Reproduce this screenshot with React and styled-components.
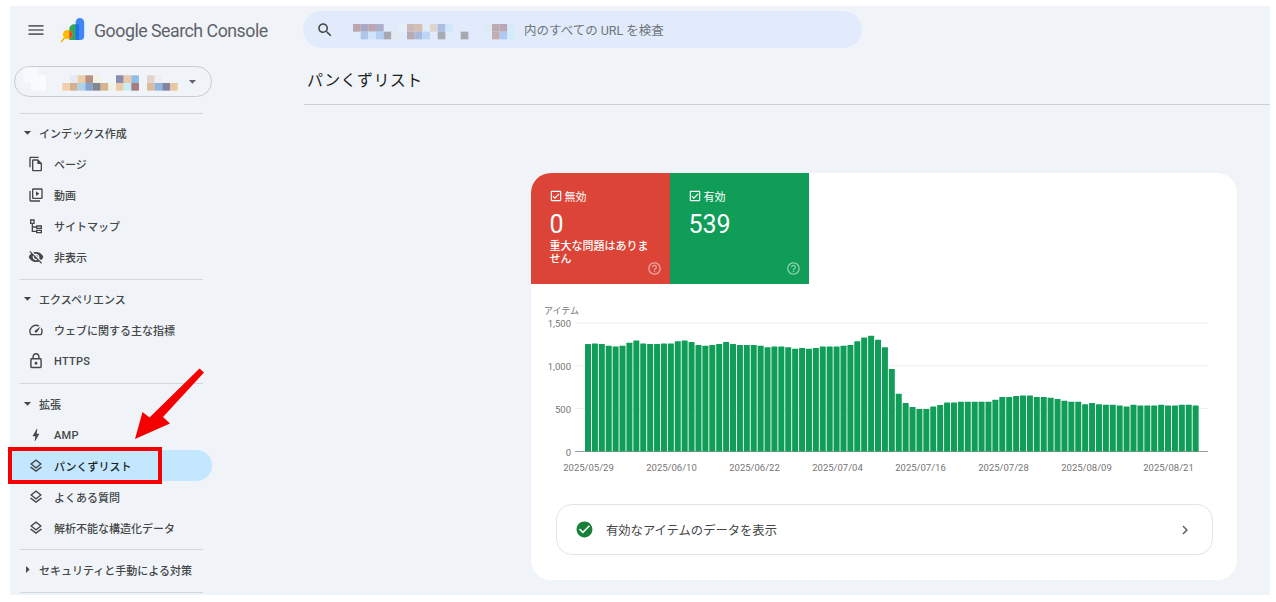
import React from 'react';
import styled, { createGlobalStyle } from 'styled-components';

const GlobalStyle = createGlobalStyle`
  html, body {
    margin: 0;
    padding: 0;
    background: #fff;
    font-family: Roboto, "Noto Sans CJK JP", sans-serif;
  }
`;

const Frame = styled.div`
  display: grid;
  grid-template-columns: 294px 966px;
  width: 1260px;
  height: 589px;
  margin: 6px 0 0 10px;
  background: #f0f4f9;
  color: #444746;
`;

const Sidebar = styled.aside`
  display: flex;
  flex-direction: column;
`;

const Brand = styled.div`
  display: flex;
  align-items: center;
  gap: 14px;
  height: 52px;
  padding-left: 16px;
  box-sizing: border-box;
  margin-top: -2px;
`;

const BrandName = styled.span`
  margin-left: -6px;
  font-size: 17.8px;
  letter-spacing: -0.5px;
  color: #5f6368;
  white-space: nowrap;
`;

const PropertyPill = styled.div`
  display: flex;
  align-items: center;
  justify-content: space-between;
  width: 198px;
  height: 31px;
  margin: 10px 0 0 4px;
  padding-right: 10px;
  box-sizing: border-box;
  border: 1px solid #c7ccd2;
  border-radius: 16px;
`;

const Divider = styled.hr`
  width: 183px;
  height: 1px;
  margin: ${(p) => p.$top || 0}px 0 0 10px;
  border: 0;
  background: #d3d6da;
`;

const NavSection = styled.section`
  display: flex;
  flex-direction: column;
  padding: ${(p) => p.$top ?? 3}px 0 ${(p) => p.$bottom ?? 7}px;
`;

const SectionHead = styled.div`
  display: flex;
  align-items: center;
  gap: 3px;
  height: 31px;
  padding-left: 9px;
  font-size: 11px;
  font-weight: 500;
  color: #444746;
`;

const NavItem = styled.div`
  position: relative;
  display: flex;
  align-items: center;
  gap: 10px;
  width: 202px;
  height: 31px;
  padding-left: 18px;
  box-sizing: border-box;
  font-size: 11px;
  font-weight: 500;
  color: ${(p) => (p.$active ? '#1f1f1f' : '#444746')};
  background: ${(p) => (p.$active ? '#c2e7ff' : 'transparent')};
  border-radius: ${(p) => (p.$active ? '0 16px 16px 0' : 0)};
`;

const LatinLabel = styled.span`
  letter-spacing: 0.3px;
  padding-top: 2px;
`;

const Highlight = styled.span`
  position: absolute;
  left: -2px;
  top: -3.5px;
  width: 154px;
  height: 37px;
  box-sizing: border-box;
  border: 4px solid #f40000;
`;

const ArrowMark = styled.svg`
  position: absolute;
  left: 124px;
  top: -83px;
`;

const Main = styled.main`
  display: flex;
  flex-direction: column;
  min-width: 0;
`;

const SearchBar = styled.div`
  display: flex;
  align-items: center;
  gap: 19px;
  width: 559px;
  height: 37px;
  margin: 5px 0 0 -1px;
  padding-left: 13px;
  box-sizing: border-box;
  background: #e1ebfb;
  border-radius: 19px;
  font-size: 12.5px;
  color: #70757a;
`;

const SearchText = styled.span`
  margin-left: -11px;
  white-space: nowrap;
`;

const PageHead = styled.header`
  height: 57px;
  padding: 20px 0 0 3px;
  box-sizing: border-box;
  border-bottom: 1px solid #cdd0d4;
`;

const PageTitle = styled.h1`
  margin: 0;
  font-size: 16px;
  line-height: 26px;
  font-weight: 400;
  letter-spacing: 0.4px;
  color: #1f1f1f;
`;

const Card = styled.div`
  width: 706px;
  height: 407px;
  margin: 68px 0 0 227px;
  background: #fff;
  border-radius: 20px;
  overflow: hidden;
`;

const Tiles = styled.div`
  display: flex;
`;

const Tile = styled.div`
  position: relative;
  width: 139px;
  height: 111px;
  padding: 16px 14px 0 18.500px;
  box-sizing: border-box;
  color: #fff;
  background: ${(p) => p.$bg};
`;

const TileLabel = styled.div`
  display: flex;
  align-items: center;
  gap: 2px;
  height: 14px;
  margin-left: -1px;
  font-size: 11px;
`;

const TileCount = styled.div`
  font-size: 25px;
  line-height: 30px;
  margin-top: 7px;
`;

const TileNote = styled.div`
  font-size: 11px;
  line-height: 13px;
  font-weight: 500;
`;

const HelpMark = styled.svg`
  position: absolute;
  right: 8.500px;
  bottom: 8.500px;
  fill: rgba(255, 255, 255, 0.55);
`;

const ChartSvg = styled.svg`
  display: block;
  margin-top: 12px;
  text {
    font-family: Roboto, "Noto Sans CJK JP", sans-serif;
    font-size: 9.500px;
    fill: #757575;
  }
`;

const DetailRow = styled.div`
  display: flex;
  align-items: center;
  width: 657px;
  height: 51px;
  margin: 18px 0 0 25px;
  padding: 0 18px 0 17.500px;
  box-sizing: border-box;
  border: 1px solid #e3e3e3;
  border-radius: 16px;
  font-size: 12.300px;
  color: #444746;
`;

const DetailText = styled.span`
  flex: 1;
  margin-left: 12.500px;
`;

const PATHS = {
  menu: 'M3 18h18v-2H3v2zm0-5h18v-2H3v2zm0-7v2h18V6H3z',
  search:
    'M15.5 14h-.79l-.28-.27C15.41 12.59 16 11.11 16 9.5 16 5.91 13.09 3 9.5 3S3 5.91 3 9.5 5.91 16 9.5 16c1.61 0 3.09-.59 4.23-1.57l.27.28v.79l5 4.99L20.49 19l-4.99-5zm-6 0C7.01 14 5 11.99 5 9.5S7.01 5 9.5 5 14 7.01 14 9.5 11.99 14 9.5 14z',
  caretDown: 'M7 10l5 5 5-5z',
  caretRight: 'M10 7l5 5-5 5z',
  page: 'M16 1H4c-1.1 0-2 .9-2 2v14h2V3h12V1zm-1 4H8c-1.1 0-1.99.9-1.99 2L6 21c0 1.1.89 2 1.99 2H19c1.1 0 2-.9 2-2V11l-6-6zM8 21V7h6v5h5v9H8z',
  video:
    'M4 6H2v14c0 1.1.9 2 2 2h14v-2H4V6zm16-4H8c-1.1 0-2 .9-2 2v12c0 1.1.9 2 2 2h12c1.1 0 2-.9 2-2V4c0-1.1-.9-2-2-2zm0 14H8V4h12v12zM12 6.500v7l5-3.500z',
  sitemap:
    'M3 2h7v7H7.5v3.5H12V11h9v5.500h-9V14.500H7.500V19H12v-1.500h9V23h-9v-2H5.500V9H3V2zm2 2v3h3V4H5zm9 9v1.500h5V13h-5zm0 6.500V21h5v-1.500h-5z',
  hidden:
    'M12 7c2.76 0 5 2.24 5 5 0 .65-.13 1.26-.36 1.83l2.92 2.92c1.51-1.26 2.7-2.89 3.43-4.75-1.73-4.39-6-7.5-11-7.5-1.4 0-2.74.25-3.98.7l2.16 2.16C10.74 7.13 11.35 7 12 7zM2 4.27l2.28 2.28.46.46C3.08 8.3 1.78 10.02 1 12c1.73 4.39 6 7.5 11 7.5 1.55 0 3.03-.3 4.38-.84l.42.42L19.73 22 21 20.73 3.27 3 2 4.27zM7.53 9.8l1.55 1.55c-.05.21-.08.43-.08.65 0 1.66 1.34 3 3 3 .22 0 .44-.03.65-.08l1.55 1.55c-.67.33-1.41.53-2.2.53-2.76 0-5-2.24-5-5 0-.79.2-1.53.53-2.2zm4.31-.78l3.15 3.15.02-.16c0-1.66-1.34-3-3-3l-.17.01z',
  gauge:
    'M20.38 8.57l-1.23 1.85a8 8 0 0 1-.22 7.58H5.07A8 8 0 0 1 15.58 6.85l1.85-1.23A10 10 0 0 0 3.35 19a2 2 0 0 0 1.72 1h13.85a2 2 0 0 0 1.74-1 10 10 0 0 0-.27-10.44zm-9.79 6.84a2 2 0 0 0 2.83 0l5.66-8.49-8.49 5.66a2 2 0 0 0 0 2.83z',
  lock: 'M18 8h-1V6c0-2.76-2.24-5-5-5S7 3.24 7 6v2H6c-1.1 0-2 .9-2 2v10c0 1.1.9 2 2 2h12c1.1 0 2-.9 2-2V10c0-1.1-.9-2-2-2zM9 6c0-1.66 1.34-3 3-3s3 1.34 3 3v2H9V6zm9 14H6V10h12v10zm-6-3c1.1 0 2-.9 2-2s-.9-2-2-2-2 .9-2 2 .9 2 2 2z',
  bolt: 'M11 21h-1l1-7H7.5c-.58 0-.57-.32-.38-.66.19-.34.05-.08.07-.12C8.48 10.94 10.42 7.54 13 3h1l-1 7h3.5c.49 0 .56.33.47.51l-.07.15C12.96 17.55 11 21 11 21z',
  layers:
    'M11.99 18.54l-7.37-5.73L3 14.07l9 7 9-7-1.63-1.27-7.38 5.74zM12 16l7.36-5.73L21 9l-9-7-9 7 1.63 1.27L12 16zm0-11.47L17.74 9 12 13.47 6.26 9 12 4.53z',
  checkbox:
    'M19 3H5c-1.1 0-2 .9-2 2v14c0 1.1.9 2 2 2h14c1.1 0 2-.9 2-2V5c0-1.1-.9-2-2-2zm0 16H5V5h14v14zM17.99 9l-1.41-1.42-6.59 6.59-2.58-2.57-1.42 1.41 4 3.99z',
  help: 'M11 18h2v-2h-2v2zm1-16C6.48 2 2 6.48 2 12s4.48 10 10 10 10-4.48 10-10S17.52 2 12 2zm0 18c-4.41 0-8-3.59-8-8s3.59-8 8-8 8 3.59 8 8-3.59 8-8 8zm0-14c-2.21 0-4 1.79-4 4h2c0-1.1.9-2 2-2s2 .9 2 2c0 2-3 1.75-3 5h2c0-2.25 3-2.5 3-5 0-2.21-1.79-4-4-4z',
  checkCircle:
    'M12 2C6.48 2 2 6.48 2 12s4.48 10 10 10 10-4.48 10-10S17.52 2 12 2zm-2 15l-5-5 1.41-1.41L10 14.17l7.59-7.59L19 8l-9 9z',
  chevron: 'M10 6L8.59 7.41 13.17 12l-4.58 4.59L10 18l6-6z',
};

const Icon = ({ name, size = 16, color = '#444746', box = '0 0 24 24' }) => (
  <svg width={size} height={size} viewBox={box} fill={color} style={{ flex: 'none' }}>
    <path d={PATHS[name]} />
  </svg>
);

const Logo = () => (
  <svg width="26" height="26" viewBox="0 0 26 26" style={{ flex: 'none' }}>
    <path d="M1.5 24.5l3.6-4.2" stroke="#f9ab00" strokeWidth="1.5" strokeLinecap="round" />
    <circle cx="7.5" cy="17.6" r="4.6" fill="#fbbc04" />
    <path d="M9.3 13.3a4.6 4.6 0 0 1 0 8.600V23h9.700V7.300h-5a4.700 4.700 0 0 0-4.700 4.700z" fill="#34a853" />
    <path d="M9.300 13.300a4.600 4.600 0 0 1 0 8.600z" fill="#ea4335" />
    <path d="M15.600 5.300a4.300 4.300 0 0 1 8.600 0V19a4 4 0 0 1-4 4h-4.600z" fill="#4285f4" />
    <path d="M15.600 7.300h3.400V23h-3.400z" fill="#1a73e8" />
  </svg>
);

const CELL = 7.67;

// [x, row, colour] of the blurred-out site name
const PILL_CELLS = [
  [8.300, -1, '#f8f9fc', 15], [16, 0, '#fafbfd', 15],
  [55, 0, '#e6e8f2'], [62.700, 0, '#eccda8'], [70.300, 0, '#b98f85'], [78, 0, '#f2f3e2'],
  [101, 0, '#8b8bac'], [108.700, 0, '#e8c9a4'], [116.300, 0, '#8fbde8'],
  [132, 0, '#e2d3cf'], [139.700, 0, '#f0eef0'],
  [47.300, 1, '#f0d0ac'], [55, 1, '#d3b08e'], [62.700, 1, '#aed0e8'], [70.300, 1, '#84a4cf'],
  [78, 1, '#83868a'], [85.700, 1, '#d6b48e'], [93.300, 1, '#f0f2e8'], [101, 1, '#eacba8'],
  [108.700, 1, '#c5edf6'], [116.300, 1, '#a67c80'],
  [132, 1, '#dcbc9c'], [139.700, 1, '#8fb5de'], [147.300, 1, '#83849f'], [155, 1, '#e5c8a3'],
];

const SEARCH_CELLS = [
  [0, 0, '#bca6b0'], [7.700, 0, '#aaa8c6'], [15.300, 0, '#bba7b3'], [23, 0, '#a9b0c8'],
  [46, 0, '#e6eef6'], [54, 0, '#cdb8b3'], [61.700, 0, '#d3bfb0'], [77, 0, '#e0d5cc'],
  [84.700, 0, '#a9bee0'], [92.300, 0, '#cfe6fb'],
  [130.700, 0, '#dfe9f3'], [139, 0, '#bda9b0'], [146.700, 0, '#bba7b3'], [154.300, 0, '#d4ecf9'],
  [7.700, 1, '#aec6ea'], [15.300, 1, '#cfe5fb'], [23, 1, '#b3cff3'], [30.700, 1, '#a6a9b0'],
  [38.300, 1, '#e2eaef'], [54, 1, '#b8aab5'], [61.700, 1, '#a9bad8'], [69.300, 1, '#bcd5f5'],
  [84.700, 1, '#a8adb5'], [107.700, 1, '#a6a9b0'],
  [139, 1, '#c2aeb1'], [146.700, 1, '#aecaf2'], [154.300, 1, '#d4ecf9'],
];

const Mosaic = ({ cells, width, height = 16, top = 0 }) => (
  <svg width={width} height={height + top} style={{ flex: 'none', filter: 'blur(0.5px)' }}>
    {cells.map(([x, row, color, size = CELL], i) => (
      <rect key={i} x={x} y={top + row * CELL} width={size} height={size} fill={color} />
    ))}
  </svg>
);

const VALUES = [
  1255, 1262, 1255, 1235, 1227, 1235, 1270, 1297, 1262, 1255, 1255, 1262, 1262, 1286, 1297, 1278,
  1243, 1235, 1243, 1255, 1278, 1255, 1243, 1243, 1243, 1235, 1216, 1227, 1227, 1216, 1200, 1208,
  1200, 1208, 1227, 1227, 1227, 1235, 1243, 1286, 1332, 1352, 1305, 1216, 962, 674, 565, 518, 495,
  495, 526, 542, 573, 573, 581, 581, 581, 581, 581, 604, 635, 635, 647, 655, 655, 635, 635, 627,
  612, 592, 581, 581, 553, 565, 553, 545, 545, 538, 526, 545, 538, 538, 538, 545, 538, 538, 545,
  545, 538,
];

const DATES = [
  ['2025/05/29', 57.500], ['2025/06/10', 140.500], ['2025/06/22', 223.500], ['2025/07/04', 306.500],
  ['2025/07/16', 389.500], ['2025/07/28', 472.500], ['2025/08/09', 555.500], ['2025/08/21', 637.500],
];

const BASE_Y = 155.500;
const scaleY = (v) => (v / 1500) * 128.500;

const Chart = () => (
  <ChartSvg width="706" height="190">
    <text x="13" y="17.500" style={{ fontSize: 9 }}>アイテム</text>
    {[1500, 1000, 500].map((v) => (
      <line key={v} x1="44" x2="677" y1={BASE_Y - scaleY(v)} y2={BASE_Y - scaleY(v)} stroke="#eeeeee" />
    ))}
    <line x1="44" x2="677" y1={BASE_Y} y2={BASE_Y} stroke="#9e9e9e" />
    {['1,500', '1,000', '500', '0'].map((label, i) => (
      <text key={label} x="40" y={31 + i * 42.900} textAnchor="end">{label}</text>
    ))}
    {VALUES.map((v, i) => (
      <rect key={i} x={54 + i * 6.905} y={BASE_Y - scaleY(v)} width="6" height={scaleY(v)} rx="0.5" fill="#0f9d58" />
    ))}
    {DATES.map(([label, x]) => (
      <text key={label} x={x} y="175" textAnchor="middle">{label}</text>
    ))}
  </ChartSvg>
);

const App = () => (
  <>
    <GlobalStyle />
    <Frame>
      <Sidebar>
        <Brand>
          <Icon name="menu" size={20} color="#5f6368" />
          <Logo />
          <BrandName>Google Search Console</BrandName>
        </Brand>
        <PropertyPill>
          <Mosaic cells={PILL_CELLS} width={166} height={21} top={8.300} />
          <Icon name="caretDown" size={17} color="#5f6368" />
        </PropertyPill>
        <Divider $top={16} />
        <NavSection>
          <SectionHead><Icon name="caretDown" size={17} />インデックス作成</SectionHead>
          <NavItem><Icon name="page" />ページ</NavItem>
          <NavItem><Icon name="video" />動画</NavItem>
          <NavItem><Icon name="sitemap" />サイトマップ</NavItem>
          <NavItem><Icon name="hidden" />非表示</NavItem>
        </NavSection>
        <Divider />
        <NavSection>
          <SectionHead><Icon name="caretDown" size={17} />エクスペリエンス</SectionHead>
          <NavItem><Icon name="gauge" />ウェブに関する主な指標</NavItem>
          <NavItem><Icon name="lock" box="2 1 20 22" /><LatinLabel>HTTPS</LatinLabel></NavItem>
        </NavSection>
        <Divider />
        <NavSection $top={4} $bottom={6}>
          <SectionHead><Icon name="caretDown" size={17} />拡張</SectionHead>
          <NavItem><Icon name="bolt" /><LatinLabel>AMP</LatinLabel></NavItem>
          <NavItem $active>
            <Icon name="layers" />パンくずリスト
            <Highlight />
            <ArrowMark width="70" height="76" viewBox="0 0 70 76">
              <path d="M66.500 1.500L71 5.500 30 50l7 6.500L2 72 9.500 45l7 5.500z" fill="#f40000" transform="translate(-1 0)" />
            </ArrowMark>
          </NavItem>
          <NavItem><Icon name="layers" />よくある質問</NavItem>
          <NavItem><Icon name="layers" />解析不能な構造化データ</NavItem>
        </NavSection>
        <Divider />
        <NavSection $top={4} $bottom={7}>
          <SectionHead><Icon name="caretRight" size={17} />セキュリティと手動による対策</SectionHead>
        </NavSection>
        <Divider />
      </Sidebar>
      <Main>
        <SearchBar>
          <Icon name="search" size={18} color="#444746" />
          <Mosaic cells={SEARCH_CELLS} width={163} top={4} />
          <SearchText>内のすべての URL を検査</SearchText>
        </SearchBar>
        <PageHead>
          <PageTitle>パンくずリスト</PageTitle>
        </PageHead>
        <Card>
          <Tiles>
            <Tile $bg="#db4437">
              <TileLabel><Icon name="checkbox" size={14} color="#fff" />無効</TileLabel>
              <TileCount>0</TileCount>
              <TileNote>重大な問題はありません</TileNote>
              <HelpMark width="15" height="15" viewBox="0 0 24 24"><path d={PATHS.help} /></HelpMark>
            </Tile>
            <Tile $bg="#0f9d58">
              <TileLabel><Icon name="checkbox" size={14} color="#fff" />有効</TileLabel>
              <TileCount>539</TileCount>
              <HelpMark width="15" height="15" viewBox="0 0 24 24"><path d={PATHS.help} /></HelpMark>
            </Tile>
          </Tiles>
          <Chart />
          <DetailRow>
            <Icon name="checkCircle" size={19} color="#188038" />
            <DetailText>有効なアイテムのデータを表示</DetailText>
            <Icon name="chevron" size={18} color="#5f6368" />
          </DetailRow>
        </Card>
      </Main>
    </Frame>
  </>
);

export default App;
